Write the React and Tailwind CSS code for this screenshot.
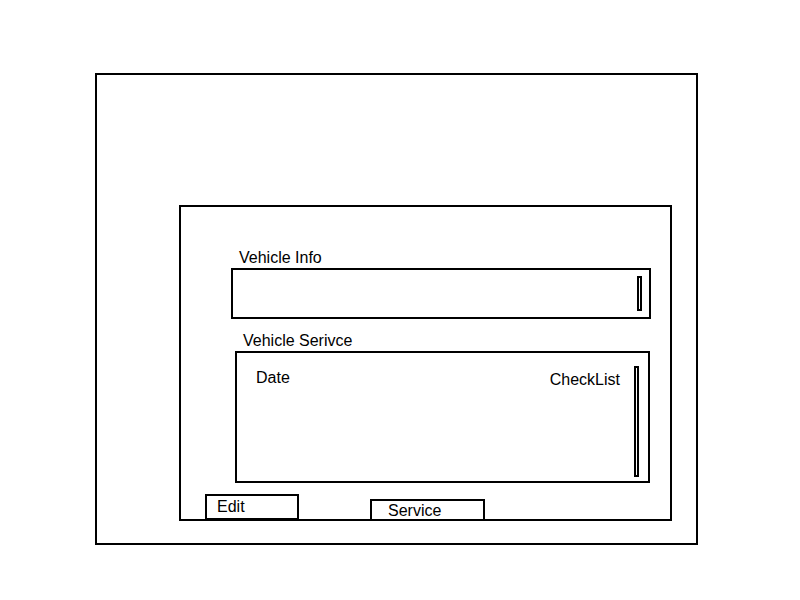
function ScrollThumb({ className }) {
  return <div aria-hidden="true" className={`w-[5px] shrink-0 border-2 border-black ${className}`} />;
}

export default function App() {
  return (
    <main className="pt-[73px] pr-[102px] pl-[95px] font-['Liberation_Sans',Arial,sans-serif] text-base leading-5 text-black">
      <div className="border-2 border-black pt-[130px] pr-6 pb-[22px] pl-[82px]">
        <div className="border-2 border-black bg-white pt-[41px]">
          <section aria-labelledby="vehicle-info" className="mr-[19px] ml-[50px]">
            <h2 id="vehicle-info" className="pl-2">Vehicle Info</h2>
            <div className="flex h-[51px] justify-end border-2 border-black py-1.5 pr-[7px]">
              <ScrollThumb className="h-[35px]" />
            </div>
          </section>

          <section aria-labelledby="vehicle-service" className="mt-3 mr-5 ml-[54px]">
            <h2 id="vehicle-service" className="pl-2">Vehicle Serivce</h2>
            <div className="flex h-[132px] items-start border-2 border-black pt-[13px] pr-[9px] pl-[19px]">
              <table className="grow border-collapse">
                <thead>
                  <tr>
                    <th scope="col" className="p-0 pt-0.5 text-left align-top font-normal">Date</th>
                    <th scope="col" className="p-0 pt-1 pr-3.5 text-right align-top font-normal">CheckList</th>
                  </tr>
                </thead>
              </table>
              <ScrollThumb className="h-[111px]" />
            </div>
          </section>

          <div className="mt-[11px] flex items-end pl-6">
            <button type="button" className="-mb-px h-[26px] w-[94px] border-2 border-black pl-2.5 text-left">
              Edit
            </button>
            <button type="button" className="ml-[71px] h-5 w-[115px] border-2 border-b-0 border-black pl-4 text-left">
              Service
            </button>
          </div>
        </div>
      </div>
    </main>
  );
}
